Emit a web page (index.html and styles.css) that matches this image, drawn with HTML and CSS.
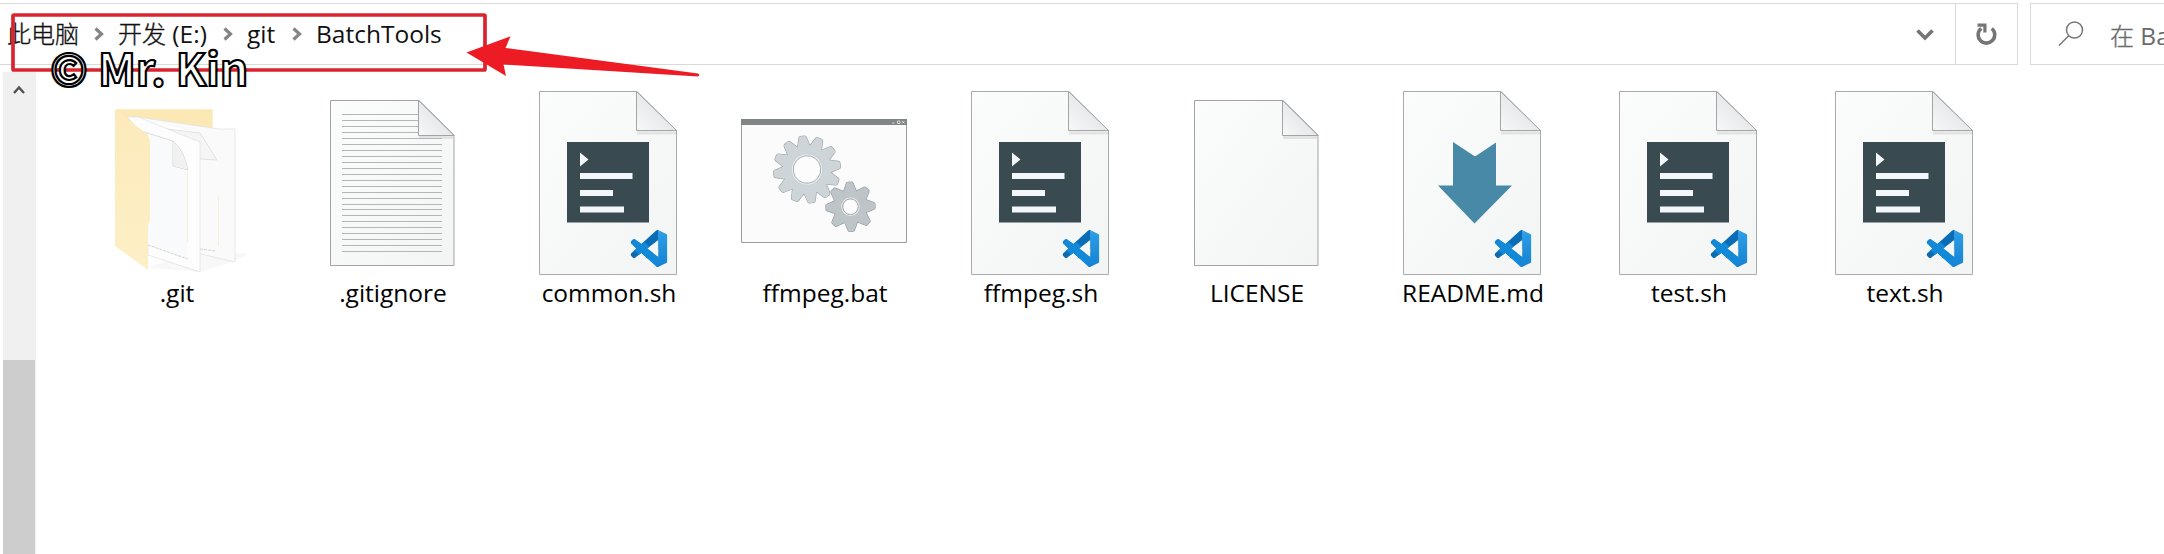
FILE: index.html
```html
<!DOCTYPE html>
<html lang="zh-CN">
<head>
<meta charset="utf-8">
<title>BatchTools</title>
<link rel="stylesheet" href="styles.css">
</head>
<body>
<svg class="defs" width="0" height="0" aria-hidden="true">
  <defs>
    <linearGradient id="paper" x1="0" y1="0" x2="1" y2="1"><stop offset="0" stop-color="#fbfcfc"/><stop offset="1" stop-color="#f3f5f5"/></linearGradient>
    <linearGradient id="curl" x1="0" y1="1" x2="1" y2="0"><stop offset="0" stop-color="#f8f8f9"/><stop offset=".6" stop-color="#e5e6e8"/><stop offset="1" stop-color="#f0f0f2"/></linearGradient>
    <linearGradient id="manila" x1="0" y1="0" x2="0" y2="1"><stop offset="0" stop-color="#fceabb"/><stop offset="1" stop-color="#fdefc6"/></linearGradient>
    <linearGradient id="bar" x1="0" y1="0" x2="0" y2="1"><stop offset="0" stop-color="#2f9fe6"/><stop offset="1" stop-color="#1583d2"/></linearGradient>
    <clipPath id="code-clip"><path clip-rule="evenodd" d="M23.15 2.587L18.21.21a1.494 1.494 0 0 0-1.705.29l-9.46 8.63-4.12-3.128a.999.999 0 0 0-1.276.057L.327 7.261A1 1 0 0 0 .326 8.74L3.899 12 .326 15.26a1 1 0 0 0 .001 1.479L1.65 17.94a.999.999 0 0 0 1.276.057l4.12-3.128 9.46 8.63a1.492 1.492 0 0 0 1.704.29l4.942-2.377A1.5 1.5 0 0 0 24 20.06V3.939a1.5 1.5 0 0 0-.85-1.352zm-5.146 14.861L10.826 12l7.178-5.448v10.896z"/></clipPath>
    <symbol id="code" viewBox="0 0 24 24">
      <g clip-path="url(#code-clip)">
        <path fill="#0a6cb4" d="M0 12V24H5L18.2 12V0H12z"/>
        <path fill="#1189d6" d="M0 4L4 4L18.2 15V24H14L0 11z"/>
        <path fill="url(#bar)" d="M18 0H24V24H17z"/>
      </g>
    </symbol>
    <symbol id="page-small" viewBox="0 0 216 200">
      <path d="M45.5 20.5H134L169 55V185.5H45.5z" fill="url(#paper)" stroke="#a3a4a5"/>
      <path d="M134 57.5H168" stroke="#e2e3e3" stroke-width="3"/>
      <path d="M133.5 20.5V55.5H169z" fill="url(#curl)" stroke="#a3a4a5"/>
    </symbol>
    <symbol id="page-large" viewBox="0 0 216 200">
      <path d="M38.5 11.5H136L175.5 50.5V194.5H38.5z" fill="url(#paper)" stroke="#a9aaab"/>
      <path d="M136 53H175" stroke="#e2e3e3" stroke-width="3"/>
      <path d="M135.5 11.5V50.5H175.5z" fill="url(#curl)" stroke="#a3a4a5"/>
      <use href="#code" x="129.5" y="150" width="37" height="37"/>
    </symbol>
    <symbol id="shell" viewBox="0 0 216 200">
      <use href="#page-large" width="216" height="200"/>
      <path fill="#394b50" d="M66 62H148V142.5H66z"/>
      <path fill="#f3f7fb" d="M79 72.5L87.5 79.5L79 86.5zM79 93H131.5V99H79zM79 110H112V116H79zM79 126.5H123V132.5H79z"/>
    </symbol>
    <path id="tooth12" d="M-6.5 -22L-3.6 -32.3Q-3 -33.5 -2 -33.5H2Q3 -33.5 3.6 -32.3L6.5 -22z"/>
    <path id="tooth8" d="M-6.5 -15L-3.3 -23.3Q-3 -24.5 -2 -24.5H2Q3 -24.5 3.3 -23.3L6.5 -15z"/>
    <g id="gear12">
      <circle r="24"/>
      <use href="#tooth12"/><use href="#tooth12" transform="rotate(30)"/><use href="#tooth12" transform="rotate(60)"/><use href="#tooth12" transform="rotate(90)"/><use href="#tooth12" transform="rotate(120)"/><use href="#tooth12" transform="rotate(150)"/><use href="#tooth12" transform="rotate(180)"/><use href="#tooth12" transform="rotate(210)"/><use href="#tooth12" transform="rotate(240)"/><use href="#tooth12" transform="rotate(270)"/><use href="#tooth12" transform="rotate(300)"/><use href="#tooth12" transform="rotate(330)"/>
    </g>
    <g id="gear8">
      <circle r="16.5"/>
      <use href="#tooth8"/><use href="#tooth8" transform="rotate(45)"/><use href="#tooth8" transform="rotate(90)"/><use href="#tooth8" transform="rotate(135)"/><use href="#tooth8" transform="rotate(180)"/><use href="#tooth8" transform="rotate(225)"/><use href="#tooth8" transform="rotate(270)"/><use href="#tooth8" transform="rotate(315)"/>
    </g>
  </defs>
</svg>

<header class="toolbar">
  <nav class="address">
    <div class="crumbs">
      <span class="crumb pc"><span class="han">此电脑</span></span>
      <svg class="sep" viewBox="0 0 10 14"><path d="M1.5 1.5L7.5 7L1.5 12.5"/></svg>
      <span class="crumb drive"><span class="han">开发</span> (E:)</span>
      <svg class="sep" viewBox="0 0 10 14"><path d="M1.5 1.5L7.5 7L1.5 12.5"/></svg>
      <span class="crumb repo">git</span>
      <svg class="sep" viewBox="0 0 10 14"><path d="M1.5 1.5L7.5 7L1.5 12.5"/></svg>
      <span class="crumb current">BatchTools</span>
    </div>
    <div class="dropdown"><svg width="18" height="12" viewBox="0 0 18 12"><path d="M1.5 1.5L9 9L16.5 1.5" fill="none" stroke="#757575" stroke-width="3.6"/></svg></div>
    <div class="refresh"><svg width="22" height="24" viewBox="0 0 22 24"><path d="M5.3 6.3A8.3 8.3 0 1 0 15.8 6.5" fill="none" stroke="#757575" stroke-width="3.6"/><path d="M1.5 1.5H10.5V10.5H7.3V4.7H1.5z" fill="#757575"/></svg></div>
  </nav>
  <div class="search">
    <svg width="26" height="26" viewBox="0 0 26 26"><g fill="none" stroke="#777" stroke-width="1.5"><circle cx="16.5" cy="9" r="8"/><path d="M10.7 14.7L1 24.5"/></g></svg>
    <span><span class="han">在</span> BatchTools</span>
  </div>
</header>

<div class="body">
  <aside class="scrollbar">
    <svg class="up" width="12" height="10" viewBox="0 0 12 10"><path d="M1 8L6 2.5L11 8" fill="none" stroke="#505050" stroke-width="2.4"/></svg>
    <div class="thumb"></div>
  </aside>
  <main class="files">
    <figure class="file">
      <svg viewBox="0 0 216 200">
        <path d="M130 170L180 174L163 182L132 192L79 188L110 176z" fill="#f8f8f8"/>
        <path d="M46 29.3H143.7V60L79 66L46 60z" fill="#fbe8b5"/>
        <path d="M69 37L150 49H166V182L132 174L69 160z" fill="#fafafa" stroke="#e2e2e2" stroke-width=".8"/>
        <path d="M69 37L94 44L131 54V170L69 160z" fill="#fff"/>
        <path d="M98 49L131 53L148 80L131 79" fill="#f5f5f5" stroke="#dcdcdc" stroke-width=".8"/>
        <path d="M58 37L69 37L131 62V192L79 175V60z" fill="#fdfdfd" stroke="#e2e2e2" stroke-width=".8"/>
        <path d="M81 54L104 61V87L118 91V180L79 166z" fill="#f9fafb"/>
        <path d="M75 52L104 61V86L119 90Q115 70 104 61" fill="none" stroke="#d2d2d2" stroke-width=".8"/>
        <path d="M104.4 62V85.6L118 89.5Q114 71 104.4 62z" fill="#f1f1f2"/>
        <path d="M118.5 92V163M149.5 117V166" stroke="#f8f0d5"/>
        <path d="M79 165L119 179M131 169L147 171" stroke="#d4d4d4" stroke-dasharray="3 1"/>
        <path d="M46 29.3L70 48Q81 54 81 62V140L79 146V190L46 166z" fill="url(#manila)"/>
      </svg>
      <figcaption>.git</figcaption>
    </figure>
    <figure class="file">
      <svg viewBox="0 0 216 200">
        <use href="#page-small" width="216" height="200"/>
        <path d="M57 34.5H133M57 40.5H133M57 46.5H133M57 52.5H133M57 58.5H157M57 64.5H157M57 70.5H157M57 76.5H157M57 82.5H157M57 88.5H157M57 94.5H157M57 100.5H157M57 106.5H157M57 112.5H157M57 118.5H157M57 124.5H157M57 129.5H157M57 135.5H157M57 141.5H157M57 147.5H157M57 153.5H157M57 159.5H157M57 165.5H157M57 171.5H157" stroke="#b4b5b6"/>
      </svg>
      <figcaption>.gitignore</figcaption>
    </figure>
    <figure class="file"><svg viewBox="0 0 216 200"><use href="#shell" width="216" height="200"/></svg><figcaption>common.sh</figcaption></figure>
    <figure class="file">
      <svg viewBox="0 0 216 200">
        <path d="M24.5 39.5H189.5V162.5H24.5z" fill="#fbfbfc" stroke="#9a9c9d"/>
        <path d="M24 39H190V45H24z" fill="#828586"/>
        <path d="M175 43H177.5M180.5 41H183V43.5H180.5zM185 41L187.5 43.5M187.5 41L185 43.5" fill="none" stroke="#e8e8e8" stroke-width=".8"/>
        <g transform="translate(90 89.5) rotate(-8)">
          <use href="#gear12" fill="#9da4a8" stroke="#9da4a8" stroke-width="1.2"/><use href="#gear12" fill="#ced5d8"/>
          <circle r="14.3" fill="#fcfcfc" stroke="#eef1f2" stroke-width="1.5"/><circle r="13.8" fill="#fcfcfc" stroke="#a0a7ab" stroke-width=".9"/>
        </g>
        <g transform="translate(133.5 126.7) rotate(-2)">
          <use href="#gear8" fill="#949b9f" stroke="#949b9f" stroke-width="1.2"/><use href="#gear8" fill="#bec5c8"/>
          <circle r="8.5" fill="#fcfcfc" stroke="#e6eaeb" stroke-width="1.5"/><circle r="7.8" fill="#fcfcfc" stroke="#959ca0" stroke-width=".9"/>
        </g>
      </svg>
      <figcaption>ffmpeg.bat</figcaption>
    </figure>
    <figure class="file"><svg viewBox="0 0 216 200"><use href="#shell" width="216" height="200"/></svg><figcaption>ffmpeg.sh</figcaption></figure>
    <figure class="file"><svg viewBox="0 0 216 200"><use href="#page-small" width="216" height="200"/></svg><figcaption>LICENSE</figcaption></figure>
    <figure class="file">
      <svg viewBox="0 0 216 200">
        <use href="#page-large" width="216" height="200"/>
        <path d="M88 62L108.5 75.5Q110 76.5 111.5 75.5L131 62.5V105.5H147L109.5 143.5L73 105.5H88z" fill="#4789a6"/>
      </svg>
      <figcaption>README.md</figcaption>
    </figure>
    <figure class="file"><svg viewBox="0 0 216 200"><use href="#shell" width="216" height="200"/></svg><figcaption>test.sh</figcaption></figure>
    <figure class="file"><svg viewBox="0 0 216 200"><use href="#shell" width="216" height="200"/></svg><figcaption>text.sh</figcaption></figure>
  </main>
</div>

<svg class="annotation" width="710" height="100" viewBox="0 0 710 100">
  <rect x="13" y="15" width="472" height="55" rx="1" fill="none" stroke="#d9252f" stroke-width="3.7"/>
  <path d="M466.5 52.5L510.5 36.3L505.5 48L698 73.5Q700.5 75 698 76.5L503.5 64.5L506 76z" fill="#ed1c24"/>
</svg>
<div class="watermark">© Mr. Kin</div>
</body>
</html>
```
FILE: styles.css
```css
* { box-sizing: border-box; }

body {
  margin: 0;
  width: 2164px;
  height: 554px;
  overflow: hidden;
  background: #fff;
  color: #111;
  font-family: "Open Sans", "Noto Sans CJK SC", sans-serif;
  font-size: 24.5px;
  display: flex;
  flex-direction: column;
}

.defs { position: absolute; }
.han {
  font-family: "Noto Sans CJK SC", sans-serif;
  font-weight: 300;
  font-size: 24px;
  -webkit-text-stroke: .35px currentColor;
}

.toolbar {
  flex: none;
  display: flex;
  gap: 12px;
  height: 65px;
  padding-top: 3px;
}

.address {
  display: flex;
  width: 2018px;
  border: 1px solid #d9d9d9;
  border-left: 0;
}

.crumbs {
  flex: 1;
  display: flex;
  align-items: center;
  padding-left: 7px;
  white-space: nowrap;
}

.crumb { line-height: 60px; padding-bottom: 1px; }
.pc { width: 87px; }
.drive { width: 105px; }
.repo { width: 45px; }
.sep { width: 10px; height: 14px; margin-right: 14px; }
.sep path { fill: none; stroke: #858585; stroke-width: 3.2; }

.dropdown { width: 60px; display: flex; align-items: center; justify-content: center; padding-top: 2px; }
.refresh { width: 62px; display: flex; align-items: center; justify-content: center; border-left: 1px solid #d9d9d9; }

.search {
  flex: 1;
  display: flex;
  align-items: center;
  gap: 26px;
  padding-left: 27px;
  overflow: hidden;
  white-space: nowrap;
  color: #6b6b6b;
  border: 1px solid #d9d9d9;
  border-right: 0;
}
.search svg { flex: none; }

.body { flex: 1; display: flex; padding-top: 7px; }

.scrollbar {
  width: 33px;
  margin-left: 3px;
  background: #f0f0f0;
  display: flex;
  flex-direction: column;
  justify-content: space-between;
}
.up { margin: 13px 0 0 10px; }
.thumb { width: 32px; height: 194px; background: #cdcdcd; }

.files { display: flex; margin-left: 33px; padding-top: 8px; }
.file { margin: 0; width: 216px; }
.file svg { display: block; width: 216px; height: 200px; }
.file figcaption { text-align: center; line-height: 32px; margin-top: -3px; color: #000; }

.annotation { position: absolute; left: 0; top: 0; }

.watermark {
  position: absolute;
  left: 50px;
  top: 37px;
  font: 700 44.5px/60px "Noto Sans CJK SC", sans-serif;
  color: #fff;
  -webkit-text-stroke: 2.2px #000;
  white-space: nowrap;
}
```
